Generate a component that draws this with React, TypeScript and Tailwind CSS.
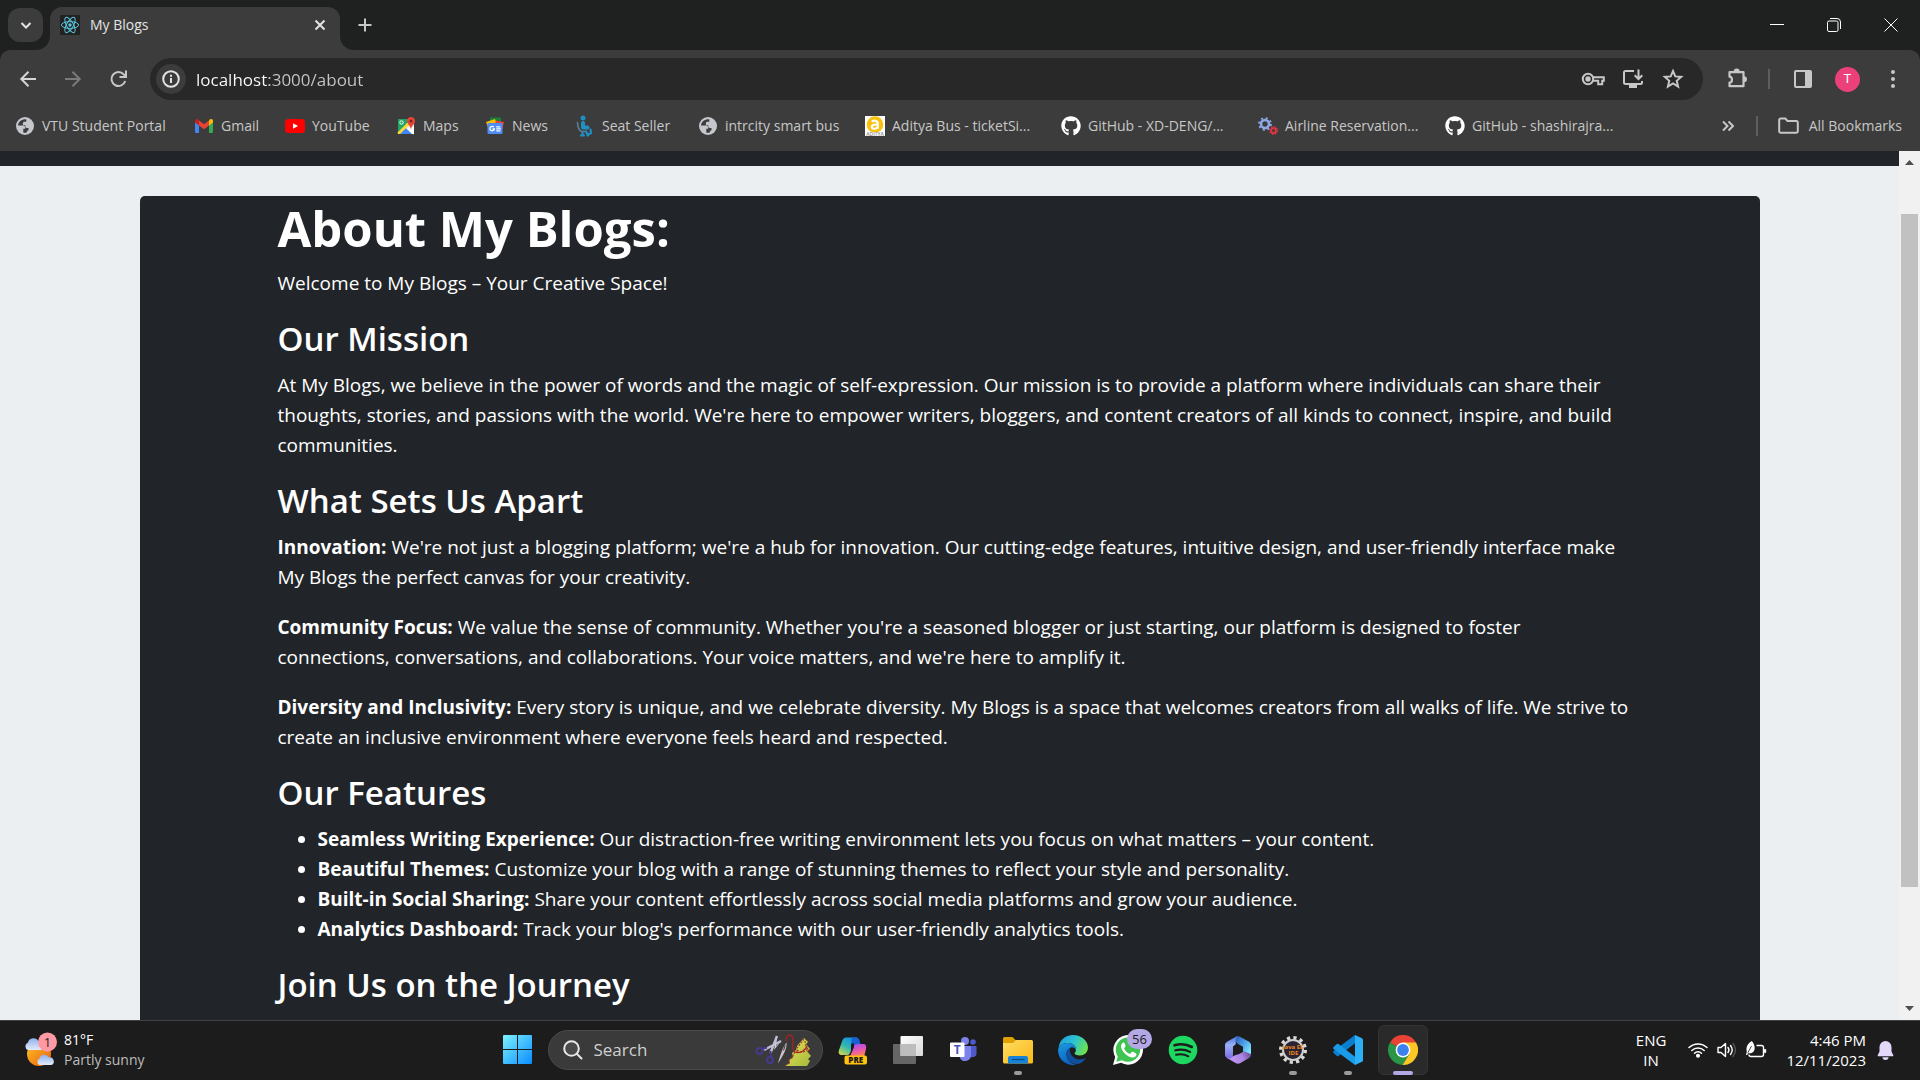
import type { ReactNode } from "react";
import { FaGithub } from "react-icons/fa";

/* ---------- small browser icons ---------- */

function ReactLogo() {
  return (
    <svg viewBox="0 0 20 20" className="size-5">
      <rect width="20" height="20" rx="1" fill="#222" />
      <g fill="none" stroke="#58c4dc" strokeWidth="1">
        <ellipse cx="10" cy="10" rx="8.6" ry="3.4" />
        <ellipse cx="10" cy="10" rx="8.6" ry="3.4" transform="rotate(60 10 10)" />
        <ellipse cx="10" cy="10" rx="8.6" ry="3.4" transform="rotate(120 10 10)" />
      </g>
      <circle cx="10" cy="10" r="1.7" fill="#58c4dc" />
    </svg>
  );
}

function Globe() {
  return (
    <svg viewBox="0 0 18 18" className="size-[18px]">
      <circle cx="9" cy="9" r="9" fill="#c4c7cc" />
      <path
        d="M8.500 2.200C5 2.500 2.200 5.200 2 8.600h4.600c1.700 0 2.600.8 2.600 2.200v.9H7.300v3.900c1 .3 2.300.3 3.400 0 .2-1.200.6-2 1.800-2.300V11h-1.700c-1 0-1.500-.6-1.500-1.400V8.300H6.900V6.400c0-1.100.7-1.700 1.700-1.700h1.700V2.400c-.6-.2-1.200-.2-1.800-.2z"
        fill="#3c3c3c"
      />
    </svg>
  );
}

function Gmail() {
  return (
    <svg viewBox="0 0 18 14" className="h-[14px] w-[18px]">
      <path d="M0 2.500V12.700C0 13.400.6 14 1.300 14H4V6z" fill="#4285f4" />
      <path d="M14 14h2.700c.7 0 1.300-.6 1.300-1.300V2.500L14 6z" fill="#34a853" />
      <path d="M14 1.500V6.500l4-3V2c0-1.900-2-2.600-3.200-1.500z" fill="#fbbc04" />
      <path d="M4 6.500V1.500L9 5.200l5-3.700v5L9 10.300z" fill="#ea4335" />
      <path d="M0 2v1.500l4 3v-5L3.200.500C2-.6 0 .1 0 2z" fill="#c5221f" />
    </svg>
  );
}

function YouTube() {
  return (
    <svg viewBox="0 0 20 14" className="h-[14px] w-5">
      <rect width="20" height="14" rx="3.500" fill="#f00" />
      <path d="M8 4.200v5.600l5-2.800z" fill="#fff" />
    </svg>
  );
}

function Maps() {
  return (
    <svg viewBox="0 0 20 20" className="size-5">
      <path d="M2 3h14v15H2z" fill="#1fa463" />
      <path d="M2 18 15 5l3 2v11H2z" fill="#e8eaed" />
      <path d="M3.500 18 9.500 11.500 16 18z" fill="#4285f4" />
      <path d="M1.500 16.500 12.500 5.500l1.500 2.800L4 18H2z" fill="#fdd835" />
      <path d="M10 12l7 6.500 1-1V11z" fill="#fff" />
      <circle cx="5.500" cy="6.500" r="1.700" fill="none" stroke="#fff" strokeWidth="1" />
      <path d="M15 1a4 4 0 0 0-4 4.200C11 8 14.300 9 15 13.500 15.700 9 19 8 19 5.200A4 4 0 0 0 15 1z" fill="#ea4335" />
      <circle cx="15" cy="5" r="1.500" fill="#7b231e" />
    </svg>
  );
}

function News() {
  return (
    <svg viewBox="0 0 20 20" className="size-5">
      <path d="M5 1.500h11v7H5z" fill="#188038" />
      <path d="M1 6l9-3 3 8-9 3z" fill="#fbbc04" />
      <path d="M11 4.500l8 1.500-2 8-8-3z" fill="#ea4335" />
      <rect x="2.500" y="7" width="15" height="11" rx="1.200" fill="#4f8df5" />
      <path d="M8.900 11.200A2.200 2.200 0 1 0 9.300 13H7.500" fill="none" stroke="#fff" strokeWidth="1.300" />
      <path d="M11.300 10.800h4M11.300 12.800h4.600M11.300 14.800h4" stroke="#fff" strokeWidth="1.200" />
    </svg>
  );
}

function SeatSeller() {
  return (
    <svg viewBox="0 0 20 22" className="h-[22px] w-5" fill="none" stroke="#1f8fc4" strokeLinecap="round" strokeLinejoin="round">
      <circle cx="8" cy="3" r="2.500" fill="#1f8fc4" stroke="none" />
      <path d="M8 8v4.500h4.500" strokeWidth="4" />
      <path d="M2.500 7.500c.2 5 1 7.500 4 9h4" strokeWidth="1.600" stroke="#5c7f96" />
      <path d="M15.500 14.500l.5 3.500-3.500 2M11 16.500l2 4M7.500 18v2.500M6 20.500h3" strokeWidth="2.200" />
    </svg>
  );
}

function Aditya() {
  return (
    <svg viewBox="0 0 20 20" className="size-5">
      <rect width="20" height="20" fill="#fff" />
      <circle cx="10" cy="8.500" r="8.300" fill="#f9c10b" />
      <path d="M6.800 5.800c2-1.800 5.900-1.300 5.900 1.400v5.600M12.500 8.600c-3-.3-5.700.2-5.700 2.200 0 2.600 4.300 2.600 5.800.2" fill="none" stroke="#fff" strokeWidth="2.200" />
      <path d="M1.500 16h17v3.500h-17z" fill="#fff" />
      <text x="10" y="19.500" textAnchor="middle" fontSize="5" fontWeight="600" fill="#888">ADITYA</text>
    </svg>
  );
}

function Gears() {
  return (
    <svg viewBox="0 0 20 20" className="size-5" fill="none">
      <circle cx="7" cy="8" r="4" stroke="#8ea9e8" strokeWidth="2.600" />
      <circle cx="7" cy="8" r="6" stroke="#8ea9e8" strokeWidth="1.800" strokeDasharray="2 2.710" />
      <circle cx="15.500" cy="14.500" r="2.500" stroke="#dc3545" strokeWidth="2" />
      <circle cx="15.500" cy="14.500" r="3.900" stroke="#dc3545" strokeWidth="1.300" strokeDasharray="1.500 1.560" />
    </svg>
  );
}

function Stroke({ children, box = 24, size = "size-6", width = 2 }: { children: ReactNode; box?: number; size?: string; width?: number }) {
  return (
    <svg viewBox={`0 0 ${box} ${box}`} className={size} fill="none" stroke="currentColor" strokeWidth={width}>
      {children}
    </svg>
  );
}

/* ---------- browser chrome ---------- */

function TabStrip() {
  return (
    <div className="flex h-[50px] shrink-0 items-end bg-[#1f2120] text-[#e3e3e3]">
      <div className="flex h-full items-center pl-2">
        <button aria-label="Search tabs" className="flex h-[34px] w-[35px] items-center justify-center rounded-xl bg-[#3c3c3c]">
          <Stroke box={12} size="size-3"><path d="M1.500 4 6 8.500 10.500 4" /></Stroke>
        </button>
      </div>
      <div className="relative ml-[7px] flex h-[43px] w-[290px] items-center rounded-t-xl bg-[#3c3c3c] pr-[10px] pb-[7px] pl-[10px]">
        <svg viewBox="0 0 14 14" className="absolute bottom-0 -left-[14px] size-[14px]"><path d="M14 0v14H0A14 14 0 0 0 14 0z" fill="#3c3c3c" /></svg>
        <svg viewBox="0 0 14 14" className="absolute -right-[14px] bottom-0 size-[14px]"><path d="M0 0v14h14A14 14 0 0 1 0 0z" fill="#3c3c3c" /></svg>
        <ReactLogo />
        <span className="ml-[10px] flex-1 text-[14px] leading-5">My Blogs</span>
        <button aria-label="Close tab" className="flex size-5 items-center justify-center">
          <Stroke box={12} size="size-3"><path d="M1.500 1.500l9 9M10.500 1.500l-9 9" /></Stroke>
        </button>
      </div>
      <button aria-label="New tab" className="ml-[13px] flex h-full w-6 items-center justify-center text-[#c7c7c7]">
        <Stroke box={14} size="size-[14px]"><path d="M7 .5v13M.5 7h13" /></Stroke>
      </button>
      <div className="ml-auto flex h-full text-white">
        <button aria-label="Minimize" className="flex w-[56px] items-center justify-center">
          <Stroke box={14} size="size-[14px]" width={1}><path d="M0 6.500h14" /></Stroke>
        </button>
        <button aria-label="Restore" className="flex w-[57px] items-center justify-center">
          <Stroke box={14} size="size-[14px]" width={1}>
            <rect x=".5" y="3" width="10.500" height="10.500" rx="1.500" />
            <path d="M3 .500h7a3.500 3.500 0 0 1 3.500 3.500v7" />
          </Stroke>
        </button>
        <button aria-label="Close" className="flex w-[58px] items-center justify-center">
          <Stroke box={14} size="size-[14px]" width={1}><path d="M.5.500l13 13M13.500.500l-13 13" /></Stroke>
        </button>
      </div>
    </div>
  );
}

function Toolbar() {
  return (
    <div className="flex h-[58px] items-center pr-[5px] pl-[5px] text-[#c7c7c7]">
      <button aria-label="Back" className="flex w-[45px] justify-center text-[#d5d5d5]">
        <Stroke box={18} size="size-[18px]"><path d="M17 9H2.500M9.500 1.800 2.300 9l7.200 7.200" /></Stroke>
      </button>
      <button aria-label="Forward" className="flex w-[45px] justify-center text-[#7a7a7a]">
        <Stroke box={18} size="size-[18px]"><path d="M1 9h14.500M8.500 1.800 15.700 9l-7.200 7.200" /></Stroke>
      </button>
      <button aria-label="Reload" className="flex w-[45px] justify-center">
        <Stroke box={18} size="size-[18px]"><path d="M16.200 11A7 7 0 1 1 14.600 4.200L16.500 6M17 .500V7h-6.500" /></Stroke>
      </button>
      <div className="ml-[10px] flex h-[42px] flex-1 items-center rounded-full bg-[#282828] pr-[10px] pl-[6px]">
        <button aria-label="Site information" className="flex size-[30px] items-center justify-center rounded-full bg-[#3c3c3c] text-[#e3e3e3]">
          <Stroke box={18} size="size-[18px]"><circle cx="9" cy="9" r="7.800" /><path d="M9 8v5M9 4.800v1.900" /></Stroke>
        </button>
        <input
          aria-label="Address"
          defaultValue="localhost:3000/about"
          className="ml-[10px] min-w-0 flex-1 bg-[linear-gradient(90deg,#ffffff_73px,#c7c7c7_73px)] bg-clip-text pt-[2px] text-[17px] text-transparent outline-none"
        />
        <button aria-label="Passwords" className="flex w-10 justify-center">
          <Stroke box={24}>
            <circle cx="7" cy="12" r="5.200" /><circle cx="7" cy="12" r="1.700" fill="currentColor" />
            <path d="M12 10.300h10.800v3.500h-1.600v3.400h-4v-3.400H12" />
          </Stroke>
        </button>
        <button aria-label="Install app" className="flex w-10 justify-center">
          <Stroke box={24}>
            <path d="M13 4H4.500A1.500 1.500 0 0 0 3 5.500v10A1.500 1.500 0 0 0 4.500 17h15a1.500 1.500 0 0 0 1.500-1.500V14" />
            <path d="M17.500 2.500v9M13.700 8.300l3.800 3.700 3.800-3.700" /><path d="M8 19.500h8" strokeWidth="3" />
          </Stroke>
        </button>
        <button aria-label="Bookmark this tab" className="flex w-10 justify-center">
          <Stroke box={24} width={2}><path d="M12 4l2.300 5.400 5.900.5-4.500 3.900 1.400 5.800-5.100-3.100-5.100 3.100 1.400-5.800-4.500-3.900 5.900-.5z" /></Stroke>
        </button>
      </div>
      <button aria-label="Extensions" className="ml-[11px] flex w-[45px] justify-center">
        <svg viewBox="0 0 24 24" className="size-6">
          <path d="M4.500 5.200h14v14h-14v-3.500c3.300-.2 3.300-5.800 0-6z" fill="none" stroke="currentColor" strokeWidth="2.200" strokeLinejoin="round" />
          <path d="M8.700 4.500a3 3 0 0 1 6 0zM19 9.200a3 3 0 0 1 0 6z" fill="currentColor" />
        </svg>
      </button>
      <div className="ml-[9px] h-5 w-[2px] bg-[#5e5e5e]" />
      <button aria-label="Side panel" className="ml-[10px] flex w-[45px] justify-center">
        <svg viewBox="0 0 18 18" className="size-[18px]">
          <rect x="1" y="1" width="16" height="16" rx="1" fill="none" stroke="currentColor" strokeWidth="2" />
          <path d="M11 1h6v16h-6z" fill="currentColor" />
        </svg>
      </button>
      <button aria-label="Profile" className="flex w-[45px] justify-center">
        <span className="flex size-[25px] items-center justify-center rounded-full bg-[#ec407a] font-[Roboto] text-[13px] text-white">T</span>
      </button>
      <button aria-label="Menu" className="flex w-[45px] justify-center">
        <svg viewBox="0 0 4 18" className="h-[18px] w-1" fill="currentColor">
          <circle cx="2" cy="2" r="2" /><circle cx="2" cy="9" r="2" /><circle cx="2" cy="16" r="2" />
        </svg>
      </button>
    </div>
  );
}

const bookmarks: { label: string; icon: ReactNode; width: string }[] = [
  { label: "VTU Student Portal", icon: <Globe />, width: "w-[179px]" },
  { label: "Gmail", icon: <Gmail />, width: "w-[91px]" },
  { label: "YouTube", icon: <YouTube />, width: "w-[111px]" },
  { label: "Maps", icon: <Maps />, width: "w-[89px]" },
  { label: "News", icon: <News />, width: "w-[90px]" },
  { label: "Seat Seller", icon: <SeatSeller />, width: "w-[123px]" },
  { label: "intrcity smart bus", icon: <Globe />, width: "w-[167px]" },
  { label: "Aditya Bus - ticketSi...", icon: <Aditya />, width: "w-[196px]" },
  { label: "GitHub - XD-DENG/...", icon: <FaGithub className="size-5 text-white" />, width: "w-[197px]" },
  { label: "Airline Reservation...", icon: <Gears />, width: "w-[187px]" },
  { label: "GitHub - shashirajra...", icon: <FaGithub className="size-5 text-white" />, width: "w-[197px]" },
];

function BookmarksBar() {
  return (
    <nav aria-label="Bookmarks" className="flex h-[43px] items-center pr-[18px] pb-2 pl-[15px] text-[14px] leading-5 whitespace-nowrap text-[#c7c7c7]">
      {bookmarks.map((b) => (
        <a key={b.label} href="#" className={`flex items-center gap-[7px] ${b.width}`}>
          <span className="flex w-5 shrink-0 justify-center">{b.icon}</span>
          {b.label}
        </a>
      ))}
      <button aria-label="More bookmarks" className="ml-auto">
        <Stroke box={12} size="size-3" width={2}><path d="M1 1.500 5.500 6 1 10.500M6.500 1.500 11 6l-4.500 4.500" /></Stroke>
      </button>
      <div className="ml-[22px] h-5 w-[2px] bg-[#5e5e5e]" />
      <a href="#" className="ml-5 flex items-center gap-[10px]">
        <svg viewBox="0 0 21 17" className="h-[17px] w-[21px]">
          <path d="M1.200 3A1.500 1.500 0 0 1 2.700 1.500h4.600L9.500 4h8.800a1.500 1.500 0 0 1 1.500 1.500v8.800a1.500 1.500 0 0 1-1.500 1.500H2.700a1.500 1.500 0 0 1-1.500-1.500z" fill="none" stroke="currentColor" strokeWidth="2" />
        </svg>
        All Bookmarks
      </a>
    </nav>
  );
}

/* ---------- page ---------- */

function Heading({ children }: { children: ReactNode }) {
  return <h2 className="mb-[10px] text-[33px] leading-[42px] font-semibold">{children}</h2>;
}

const features = [
  ["Seamless Writing Experience:", "Our distraction-free writing environment lets you focus on what matters – your content."],
  ["Beautiful Themes:", "Customize your blog with a range of stunning themes to reflect your style and personality."],
  ["Built-in Social Sharing:", "Share your content effortlessly across social media platforms and grow your audience."],
  ["Analytics Dashboard:", "Track your blog's performance with our user-friendly analytics tools."],
];

const strengths = [
  ["Innovation:", "We're not just a blogging platform; we're a hub for innovation. Our cutting-edge features, intuitive design, and user-friendly interface make My Blogs the perfect canvas for your creativity."],
  ["Community Focus:", "We value the sense of community. Whether you're a seasoned blogger or just starting, our platform is designed to foster connections, conversations, and collaborations. Your voice matters, and we're here to amplify it."],
  ["Diversity and Inclusivity:", "Every story is unique, and we celebrate diversity. My Blogs is a space that welcomes creators from all walks of life. We strive to create an inclusive environment where everyone feels heard and respected."],
];

function Page() {
  return (
    <div className="flex min-h-0 flex-1">
      <main className="min-w-0 flex-1 overflow-hidden bg-[#ebeff2]">
        <div className="h-[15px] bg-[#212529]" />
        <article className="mx-auto mt-[30px] max-w-[1620px] rounded-[5px] bg-[#212529] pt-[2px] pr-[127px] pb-10 pl-[138px] text-[19px] leading-[30px] text-white">
          <h1 className="mb-[10px] text-[49px] leading-[60px] font-bold">About My Blogs:</h1>
          <p className="mb-5">Welcome to My Blogs – Your Creative Space!</p>
          <Heading>Our Mission</Heading>
          <p className="mb-5">
            At My Blogs, we believe in the power of words and the magic of self-expression. Our mission is to provide a platform where individuals can share their thoughts, stories, and passions with the world. We're here to empower writers, bloggers, and content creators of all kinds to connect, inspire, and build communities.
          </p>
          <Heading>What Sets Us Apart</Heading>
          {strengths.map(([name, text]) => (
            <p key={name} className="mb-5"><strong>{name}</strong> {text}</p>
          ))}
          <Heading>Our Features</Heading>
          <ul className="mb-5 list-disc pl-10">
            {features.map(([name, text]) => (
              <li key={name}><strong>{name}</strong> {text}</li>
            ))}
          </ul>
          <Heading>Join Us on the Journey</Heading>
        </article>
      </main>
      <div className="flex w-[21px] shrink-0 flex-col items-center bg-[#f1f1f1]">
        <svg viewBox="0 0 21 21" className="size-[21px]"><path d="M6 14l4.500-5 4.500 5z" fill="#505050" /></svg>
        <div className="flex w-[17px] flex-1 flex-col">
          <div className="flex-[42]" />
          <div className="flex-[672] bg-[#c1c1c1]" />
          <div className="flex-[112]" />
        </div>
        <svg viewBox="0 0 21 21" className="size-[21px]"><path d="M6 7l4.500 5L15 7z" fill="#505050" /></svg>
      </div>
    </div>
  );
}

/* ---------- taskbar ---------- */

function Weather() {
  return (
    <svg viewBox="0 0 34 36" className="h-9 w-[34px]">
      <defs>
        <linearGradient id="sun" x1="0" y1="0" x2="1" y2="1"><stop offset="0" stopColor="#ffc328" /><stop offset="1" stopColor="#e8600c" /></linearGradient>
        <linearGradient id="cloud" x1="0" y1="0" x2="0" y2="1"><stop offset="0" stopColor="#8fb0ec" /><stop offset="1" stopColor="#e2ebfb" /></linearGradient>
      </defs>
      <circle cx="16" cy="22" r="12" fill="url(#sun)" />
      <path d="M5 18a4 4 0 0 1 0-7.500 5.600 5.600 0 0 1 10.500-1.200A4.500 4.500 0 0 1 18 18z" fill="url(#cloud)" />
      <path d="M16.500 33a3.500 3.500 0 0 1 0-6.500 5 5 0 0 1 9.300-1A3.800 3.800 0 0 1 28 33z" fill="url(#cloud)" />
      <circle cx="24.500" cy="10" r="9.500" fill="#ff99a4" />
      <text x="24.500" y="15" textAnchor="middle" fontSize="13" fill="#222">1</text>
    </svg>
  );
}

function WindowsLogo() {
  return (
    <svg viewBox="0 0 29 29" className="size-[29px]">
      <defs><linearGradient id="win" gradientUnits="userSpaceOnUse" x1="0" y1="0" x2="29" y2="29"><stop offset="0" stopColor="#7df2ff" /><stop offset="1" stopColor="#0a8cff" /></linearGradient></defs>
      <path d="M1 0h13v14H0V1a1 1 0 0 1 1-1zM15 0h13a1 1 0 0 1 1 1v13H15zM0 15h14v14H1a1 1 0 0 1-1-1zM15 15h14v13a1 1 0 0 1-1 1H15z" fill="url(#win)" />
    </svg>
  );
}

function Doodle() {
  return (
    <svg viewBox="0 0 58 34" className="h-[34px] w-[58px] shrink-0" fill="none">
      <defs><linearGradient id="tree" x1="0" y1="0" x2="1" y2="1"><stop offset="0" stopColor="#e6e65a" /><stop offset="1" stopColor="#a6b83a" /></linearGradient></defs>
      <path d="M49 5 42 13l-1 4-4 3 1 4-4 3 1 3-5 3h22l3-5-2-2 3-3-4-5 3-2-4-5 2-2z" fill="url(#tree)" />
      <path d="M49 6l-7 9 0 3-4 3 0 3-4 3 0 3-3 2M50 8l1 6 3 3-1 3M42 17c4 4 9 2 11-2" stroke="#a8322a" strokeWidth="1.200" strokeDasharray="2 1.300" />
      <path d="M31 8c0-8 7-8 7 0 0 5-2 8 2 11 5 2 11-2 12-6" stroke="#b02020" strokeWidth="1.300" />
      <path d="M22 3 15.500 20M26 8 9 17" stroke="#c3bdd3" strokeWidth="2.400" />
      <path d="M22 3l-1 10 6-6-8 10z" fill="#d6d1e3" />
      <circle cx="4.500" cy="18" r="3" stroke="#453a8c" strokeWidth="2" />
      <circle cx="15" cy="27" r="3" stroke="#453a8c" strokeWidth="2" />
      <path d="M7 16l5-1.500M16 24l-.500-6" stroke="#453a8c" strokeWidth="2" />
      <path d="M31.500 9.500c-4 5-7 15-8.500 21C27 24 32.500 16 31.500 9.500z" fill="#cbbfd0" />
      <path d="M30.300 12 28.500 17.500" stroke="#4a3a3a" strokeWidth="1" />
    </svg>
  );
}

function Copilot() {
  return (
    <svg viewBox="0 0 30 30" className="size-[30px]">
      <defs>
        <linearGradient id="cpA" x1=".7" y1="0" x2=".1" y2="1"><stop offset="0" stopColor="#1b8fe8" /><stop offset=".5" stopColor="#2fb9b0" /><stop offset="1" stopColor="#d6d84a" /></linearGradient>
        <linearGradient id="cpB" x1=".3" y1="0" x2=".6" y2="1"><stop offset="0" stopColor="#a24ff0" /><stop offset=".5" stopColor="#e857b0" /><stop offset="1" stopColor="#ff8a4a" /></linearGradient>
      </defs>
      <path d="M8 2.500h11L13 16c-.8 2.500-1.500 4-4 4H4c-3 0-4-2-3-5l3-8.500C5 3.500 6.500 2.500 8 2.500z" fill="url(#cpA)" />
      <path d="M14 2.500h4c2 0 3 1 3.500 3l1 3.500h-3c-2 0-3 1-3.600 3L13 9z" fill="#1763d6" />
      <path d="M19 9h6c3 0 3.500 2 3 5l-2 8H11.500l4-9.500C16 10 17 9 19 9z" fill="url(#cpB)" />
      <path d="M13 9l3-1 0 4-4 9h-3c2-1 3-2 4-5z" fill="#1c1c1c" />
      <rect x="6.500" y="20.500" width="22.500" height="9" rx="2" fill="#ffc20e" />
      <text x="17.800" y="28" textAnchor="middle" fontSize="8" fontWeight="800" fill="#1a1a1a">PRE</text>
    </svg>
  );
}

function TaskView() {
  return (
    <svg viewBox="0 0 30 30" className="size-[30px]">
      <defs><linearGradient id="tv" x1="0" y1="0" x2="1" y2="1"><stop offset="0" stopColor="#fff" /><stop offset="1" stopColor="#d8d8d8" /></linearGradient></defs>
      <rect x="0" y="9" width="23" height="20" rx="1" fill="#666" />
      <rect x="7.500" y="1" width="22.500" height="20" rx="1" fill="url(#tv)" />
      <path d="M7.500 9H23v12H7.500z" fill="#bdbdbd" />
    </svg>
  );
}

function Teams() {
  return (
    <svg viewBox="0 0 30 30" className="size-[30px]">
      <circle cx="17" cy="6" r="4" fill="#7b83eb" />
      <circle cx="25" cy="7" r="2.800" fill="#5059c9" />
      <path d="M20 11h8.500v7.500c0 5-8.500 5-8.500 0z" fill="#5059c9" />
      <path d="M10 11h13v9c0 3.500-2.500 6-6 6s-5-2-5.500-5z" fill="#7b83eb" />
      <rect x="2" y="7.500" width="14.500" height="14.500" rx="1" fill="#fff" />
      <text x="9.200" y="19" textAnchor="middle" fontSize="12" fontWeight="700" fill="#4b53bc">T</text>
    </svg>
  );
}

function Explorer() {
  return (
    <svg viewBox="0 0 30 30" className="size-[30px]">
      <defs><linearGradient id="fold" x1="0" y1="0" x2="1" y2="1"><stop offset="0" stopColor="#ffdc66" /><stop offset="1" stopColor="#fbb813" /></linearGradient></defs>
      <path d="M0 3.500A1.500 1.500 0 0 1 1.500 2h8l3 3H28v5H0z" fill="#dfa000" />
      <path d="M0 8h10l3-3h15.500A1.500 1.500 0 0 1 30 6.500V27a1.500 1.500 0 0 1-1.500 1.500h-27A1.500 1.500 0 0 1 0 27z" fill="url(#fold)" />
      <path d="M5 28.500V23a2 2 0 0 1 2-2h16a2 2 0 0 1 2 2v5.500z" fill="#1683d8" />
      <path d="M9 24.500h12.500" stroke="#0a4c8a" strokeWidth="1.200" />
    </svg>
  );
}

function Edge() {
  return (
    <svg viewBox="0 0 30 30" className="size-[30px]">
      <defs>
        <linearGradient id="edA" x1="0" y1=".2" x2="1" y2=".6"><stop offset="0" stopColor="#1f9fe0" /><stop offset=".5" stopColor="#2cc3cf" /><stop offset="1" stopColor="#6ee34a" /></linearGradient>
        <linearGradient id="edB" x1="0" y1="0" x2=".4" y2="1"><stop offset="0" stopColor="#1c9be0" /><stop offset="1" stopColor="#0a63c4" /></linearGradient>
      </defs>
      <path d="M.5 13C1.500 5 7.500 0 15 0c8.500 0 15 6 15 12.500 0 5-4 8-8 8-3.500 0-5.500-1.200-5.500-2.200 0-.8 1.500-1.300 1.500-4C18 11 14.500 8 10 8 5.500 8 2 10 .5 13z" fill="url(#edA)" />
      <path d="M.2 14C1.500 10 5.500 8 10 8c4.500 0 8 3 8 6.300 0 .3 0 .6-.1.900C17 13 15 12 13 12.500 10 13.500 8 16.500 8.500 20c.5 5 5 9 9.500 9.700C8 31.500-.8 24 .2 14z" fill="url(#edB)" />
      <path d="M12.500 12.700C8 15 7.500 20 10 24c3 4.500 9 6.500 13 4 2-1.200 3.800-3 4.800-5-3.500 2-9 2-12.300-.800-3-2.500-4.500-6-3-9.500z" fill="#124f9c" />
    </svg>
  );
}

function WhatsApp() {
  return (
    <span className="relative block">
      <svg viewBox="0 0 30 30" className="size-[30px]">
        <path d="M0 30l2.200-8A14.800 14.800 0 1 1 8 27.800z" fill="#fff" />
        <path d="M3.300 26.700l1.500-5.300A12.200 12.200 0 1 1 9 25.300z" fill="#3fc351" />
        <path d="M10.500 7.500c-.6 0-2.500 1.200-2.500 4 0 4.500 7 11 11.500 11 2.500 0 4-1.500 4-3.200 0-.5-.2-.7-.6-1l-3-1.500c-.5-.2-.9-.1-1.200.3l-1.200 1.500c-.3.300-.6.300-1 .100-2.300-1-4-2.500-5.200-4.800-.2-.4-.1-.7.100-1l1-1.300c.2-.3.200-.7.100-1L11.400 8c-.2-.4-.5-.5-.9-.5z" fill="#fff" />
      </svg>
      <span className="absolute -top-[6px] left-[14px] flex h-5 w-[25px] items-center justify-center rounded-full bg-[#b4a7e5] text-[13px] text-[#1c1c1c]">56</span>
    </span>
  );
}

function Spotify() {
  return (
    <svg viewBox="0 0 30 30" className="size-[30px]" fill="none" stroke="#1c1c1c" strokeLinecap="round">
      <circle cx="15" cy="15" r="14.300" fill="#1ed760" stroke="none" />
      <path d="M6.500 10.300c5.500-1.600 12.500-1 17.300 1.700" strokeWidth="2.600" />
      <path d="M7.300 15.300c5-1.300 10.500-.7 14.800 1.600" strokeWidth="2.200" />
      <path d="M8 19.800c4.300-1 8.700-.5 12.400 1.500" strokeWidth="1.900" />
    </svg>
  );
}

function M365() {
  return (
    <svg viewBox="0 0 30 30" className="size-[30px]">
      <defs>
        <linearGradient id="mA" x1=".3" y1="0" x2=".3" y2="1"><stop offset="0" stopColor="#4f78dc" /><stop offset=".4" stopColor="#9ab2f8" /><stop offset="1" stopColor="#7a6ae0" /></linearGradient>
        <linearGradient id="mB" x1="0" y1="0" x2="1" y2=".8"><stop offset="0" stopColor="#2c55b4" /><stop offset=".5" stopColor="#4a9ae6" /><stop offset="1" stopColor="#7fe8fb" /></linearGradient>
        <linearGradient id="mC" x1="0" y1=".6" x2="1" y2=".3"><stop offset="0" stopColor="#c49af8" /><stop offset=".6" stopColor="#ac86e2" /><stop offset="1" stopColor="#6b4a96" /></linearGradient>
      </defs>
      <path d="M28 16.500v3c0 1.500-.7 2.700-2 3.400l-8.500 5c-1.700 1-3.300 1-5 0L4 23l5-1.500 9-3.500 4-3.500z" fill="url(#mC)" />
      <path d="M12.500 1.900c1.700-1 3.300-1 5 0L26 6.800c1.300.8 2 2 2 3.500V19l-8-3v-4.300l-5-2.800-3-3z" fill="url(#mB)" />
      <path d="M14.500 1.500c-2 1.500-2.200 4-1.500 7.400l-3 2.600v8c0 3.500-3.500 5-6 3.400-1.300-.8-2-2-2-3.400V10.300c0-1.500.7-2.700 2-3.500l8.500-4.900c.7-.4 1.300-.5 2-.4z" fill="url(#mA)" />
      <path d="M15 9.700l5 2.700v4L15 19.500l-5-2.700v-4.400z" fill="#1c1c1c" />
    </svg>
  );
}

function Eclipse() {
  return (
    <svg viewBox="0 0 30 30" className="size-[30px] overflow-visible">
      <circle cx="15" cy="15" r="12.300" fill="none" stroke="#d9d9d9" strokeWidth="3.400" strokeDasharray="3.220 3.220" />
      <circle cx="15" cy="15" r="10" fill="#2a2333" stroke="#d0d0d0" strokeWidth="2" />
      <g fill="#f08a1d" fontSize="6" fontWeight="700" textAnchor="middle">
        <text x="15" y="14">Java EE</text>
        <text x="15.500" y="20">IDE</text>
      </g>
    </svg>
  );
}

function VSCode() {
  return (
    <svg viewBox="0 0 30 30" className="size-[30px]">
      <path d="M22 0v8.200L5.500 20.900a1.300 1.300 0 0 1-1.600 0L.6 18a1.300 1.300 0 0 1 0-1.900z" fill="#0a7fd0" />
      <path d="M22 30v-8.200L5.500 9.100a1.300 1.300 0 0 0-1.600 0L.6 12a1.300 1.300 0 0 0 0 1.900z" fill="#1a9be8" />
      <path d="M22 0l7 3.200c.6.300 1 .9 1 1.600v20.400c0 .7-.4 1.300-1 1.600L22 30z" fill="#2bb0f8" />
    </svg>
  );
}

function Chrome() {
  return (
    <svg viewBox="0 0 30 30" className="size-[30px]">
      <path d="M15 15 2 7.500a15 15 0 0 1 26 0z" fill="#ea4335" />
      <path d="M15 15 2 7.500a15 15 0 0 0 12.500 22.500L21.500 18.700z" fill="#2a9447" />
      <path d="M15 7.500h13A15 15 0 0 1 14.500 30l7-11.300z" fill="#fcc624" />
      <circle cx="15" cy="15" r="7.400" fill="#fff" />
      <circle cx="15" cy="15" r="5.900" fill="#3b82ee" />
    </svg>
  );
}

const apps: { name: string; icon: ReactNode; mark?: string; active?: boolean }[] = [
  { name: "Copilot", icon: <Copilot /> },
  { name: "Task view", icon: <TaskView /> },
  { name: "Teams", icon: <Teams /> },
  { name: "File Explorer", icon: <Explorer />, mark: "w-2 bg-[#9a9a9a]" },
  { name: "Edge", icon: <Edge /> },
  { name: "WhatsApp", icon: <WhatsApp /> },
  { name: "Spotify", icon: <Spotify /> },
  { name: "Microsoft 365", icon: <M365 /> },
  { name: "Eclipse", icon: <Eclipse />, mark: "w-2 bg-[#9a9a9a]" },
  { name: "VS Code", icon: <VSCode />, mark: "w-2 bg-[#9a9a9a]" },
  { name: "Chrome", icon: <Chrome />, mark: "w-5 bg-[#b4a7e5]", active: true },
];

function Taskbar() {
  return (
    <footer className="grid h-[60px] shrink-0 grid-cols-[1fr_auto_1fr] items-center border-t border-[#404244] bg-[#1c1c1c] pb-[2px] text-[14px] leading-5 text-white">
      <button className="flex items-center gap-[7px] justify-self-start pl-[23px] text-left">
        <Weather />
        <span>
          <span className="block">81°F</span>
          <span className="block text-[#bdbdbd]">Partly sunny</span>
        </span>
      </button>
      <div className="flex h-full items-center">
        <button aria-label="Start" className="flex w-[55px] justify-center"><WindowsLogo /></button>
        <div className="w-[281px] px-[3px]">
          <label className="flex h-10 items-center rounded-full border border-[#4b4b4b] bg-[#3a3a3a] pr-[9px] pl-[14px]">
            <svg viewBox="0 0 20 20" className="size-5 shrink-0" fill="#4a4a4a" stroke="#e8e8e8" strokeWidth="2" strokeLinecap="round">
              <circle cx="8.500" cy="8.500" r="7.300" /><path d="M14 14l4.500 4.500" />
            </svg>
            <input aria-label="Search" placeholder="Search" className="ml-[11px] min-w-0 flex-1 bg-transparent text-[17px] outline-none placeholder:text-[#d0d0d0]" />
            <Doodle />
          </label>
        </div>
        {apps.map((app) => (
          <button key={app.name} aria-label={app.name} className="relative flex w-[55px] justify-center">
            <span className={app.active ? "flex size-[50px] items-center justify-center rounded-md border border-[#333] bg-[#2a2a2a]" : "flex size-[50px] items-center justify-center"}>
              {app.icon}
            </span>
            {app.mark && (
              <span className="absolute inset-x-0 bottom-0 flex justify-center"><span className={`h-1 rounded-full ${app.mark}`} /></span>
            )}
          </button>
        ))}
      </div>
      <div className="flex items-center justify-self-end pr-[26px] text-[15px]">
        <button className="text-center"><span className="block">ENG</span><span className="block">IN</span></button>
        <button aria-label="Network, volume and battery" className="ml-[22px] flex items-center gap-[9px]">
          <svg viewBox="0 0 20 16" className="h-4 w-5" fill="none" stroke="#fff" strokeWidth="1.500" strokeLinecap="round">
            <path d="M1 5.500a13 13 0 0 1 18 0" /><path d="M3.800 8.500a9 9 0 0 1 12.400 0" /><path d="M6.500 11.300a5 5 0 0 1 7 0" />
            <circle cx="10" cy="13.700" r="1.300" fill="#fff" />
          </svg>
          <svg viewBox="0 0 20 18" className="h-[18px] w-5" fill="none" stroke="#fff" strokeWidth="1.400" strokeLinecap="round" strokeLinejoin="round">
            <path d="M1 6.500h3L8.500 2.500v13L4 11.500H1z" /><path d="M11 6.500q2 2.500 0 5M13.500 4.500q3.500 4.500 0 9" /><path d="M16 2.500q5 6.500 0 13" stroke="#555" />
          </svg>
          <svg viewBox="0 0 21 18" className="h-[18px] w-[21px]" fill="none" stroke="#fff" strokeWidth="1.400">
            <path d="M10.500 4.500h5a2 2 0 0 1 2 2v7a2 2 0 0 1-2 2H5a2 2 0 0 1-2-2" />
            <path d="M18.500 8.500h1.200v3h-1.200z" fill="#fff" strokeWidth="1" />
            <path d="M5.800 0C2 2.500-.5 5.500.8 10.500L0 14h1.200l.8-1.800c3.500.8 6.700-1.200 6.700-5.200C8.700 4 7.500 2 5.800 0z" fill="#fff" stroke="none" />
            <path d="M1.800 11.800 5.500 5" stroke="#1c1c1c" strokeWidth=".8" />
          </svg>
        </button>
        <button className="ml-[19px] text-right"><span className="block">4:46 PM</span><span className="block">12/11/2023</span></button>
        <button aria-label="Notifications" className="ml-[11px]">
          <svg viewBox="0 0 17 20" className="h-5 w-[17px]">
            <path d="M8.500 1A6 6 0 0 0 2.500 7v4.500L.7 15.300c-.2.500.1 1 .6 1h14.400c.5 0 .8-.5.600-1L14.500 11.500V7a6 6 0 0 0-6-6z" fill="#e3d7fa" />
            <path d="M5.500 17.300a3 2.600 0 0 0 6 0z" fill="#e3d7fa" />
          </svg>
        </button>
      </div>
    </footer>
  );
}

export default function App() {
  return (
    <div className="flex h-screen flex-col overflow-hidden bg-[#1f2120] font-['Open_Sans','Noto_Sans',sans-serif]">
      <TabStrip />
      <header className="shrink-0 rounded-t-[10px] bg-[#3c3c3c]">
        <Toolbar />
        <BookmarksBar />
      </header>
      <Page />
      <Taskbar />
    </div>
  );
}
